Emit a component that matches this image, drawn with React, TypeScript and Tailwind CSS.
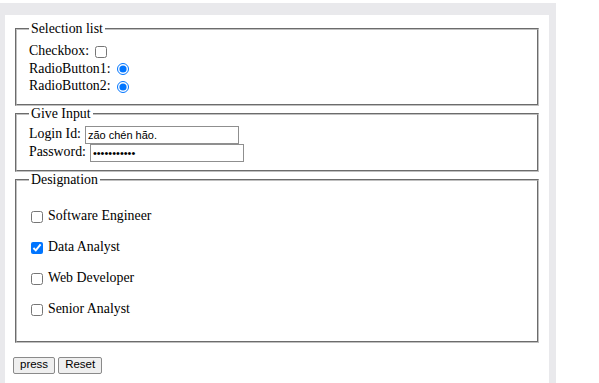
import React from 'react'

const serif = "[font-family:'Liberation_Serif','Times_New_Roman',serif]"
const arial = "[font-family:'Liberation_Sans',Arial,sans-serif]"

const designations = [
	{ id: 'se', label: 'Software Engineer', checked: false },
	{ id: 'da', label: 'Data Analyst', checked: true },
	{ id: 'wd', label: 'Web Developer', checked: false },
	{ id: 'sa', label: 'Senior Analyst', checked: false },
]

const fieldsetCls =
	'mx-[2px] min-w-0 border-2 [border-style:groove] border-[#c0c0c0] px-[12px]'
const legendCls = 'px-[2px] leading-[16px]'
const inputCls = `ml-[4px] h-[18px] w-[154px] border border-[#8f8f8f] px-[2px] text-[11px] outline-none ${arial}`

const App: React.FC = () => {
	return (
		<div className={`min-h-screen bg-white pt-[3px] text-[13.85px] text-black ${serif}`}>
			<div className="flex h-[380px] w-[556px] flex-col bg-[#e9e9ec] pl-[5px] pr-[7px] pt-[12px]">
				<form className="flex-1 bg-white px-[8px] pt-[6px]">
					<fieldset className={`${fieldsetCls} pt-[6px] pb-[8px]`}>
						<legend className={legendCls}>Selection list</legend>
						<div className="flex h-[17.5px] items-center">
							<span>Checkbox:</span>
							<input type="checkbox" className="ml-[6px] h-[12px] w-[12px]" />
						</div>
						<div className="flex h-[17.5px] items-center">
							<span>RadioButton1:</span>
							<input
								type="radio"
								name="r1"
								defaultChecked
								className="ml-[6px] h-[12px] w-[12px]"
							/>
						</div>
						<div className="flex h-[17.5px] items-center">
							<span>RadioButton2:</span>
							<input
								type="radio"
								name="r2"
								defaultChecked
								className="ml-[6px] h-[12px] w-[12px]"
							/>
						</div>
					</fieldset>

					<fieldset className={`${fieldsetCls} pt-[4px] pb-[8px]`}>
						<legend className={legendCls}>Give Input</legend>
						<div className="flex h-[18px] items-center">
							<span>Login Id:</span>
							<input type="text" defaultValue="zão chén hão." className={inputCls} />
						</div>
						<div className="flex h-[18px] items-center">
							<span>Password:</span>
							<input type="password" defaultValue="12345678901" className={inputCls} />
						</div>
					</fieldset>

					<fieldset className={`${fieldsetCls} pt-[21px] pb-[23px]`}>
						<legend className={legendCls}>Designation</legend>
						<div className="flex flex-col gap-[15px]">
							{designations.map((d) => (
								<label key={d.id} className="flex h-[16px] items-center">
									<input
										type="checkbox"
										defaultChecked={d.checked}
										className="ml-[2px] mr-[5px] h-[12px] w-[12px]"
									/>
									<span>{d.label}</span>
								</label>
							))}
						</div>
					</fieldset>

					<div className={`mt-[14px] flex gap-[3px] text-[11.5px] ${arial}`}>
						<button
							type="button"
							className="h-[17px] rounded-[2px] border border-[#8a8a8a] bg-[#efefef] px-[6px] leading-none">
							press
						</button>
						<button
							type="reset"
							className="h-[17px] rounded-[2px] border border-[#8a8a8a] bg-[#efefef] px-[6px] leading-none">
							Reset
						</button>
					</div>
				</form>
			</div>
		</div>
	)
}

export default App
